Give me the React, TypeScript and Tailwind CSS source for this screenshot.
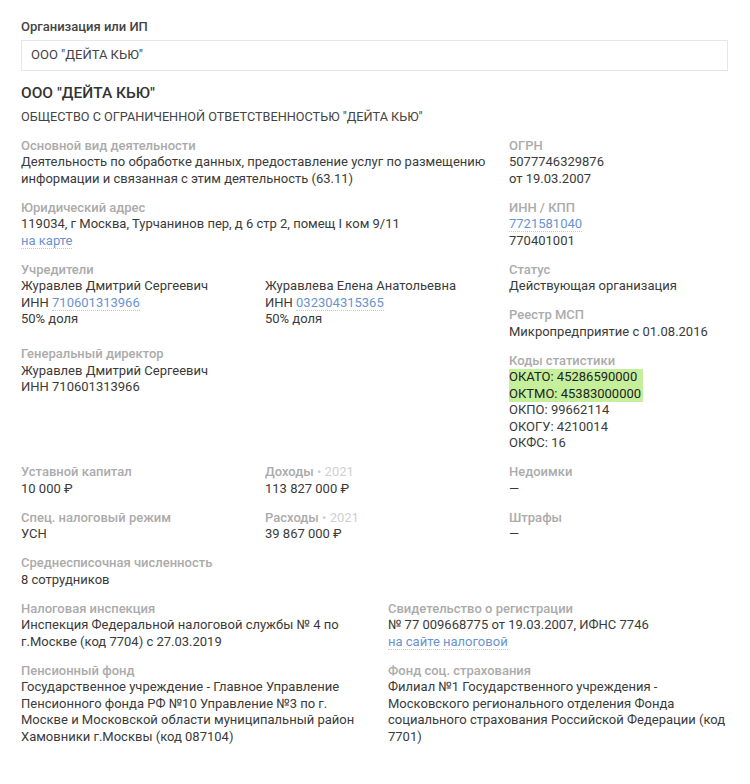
// Company card (Russian registry extract)

import React from "react";

const font = { fontFamily: "Roboto, 'Noto Sans', sans-serif" };

function Label({ children }: { children: React.ReactNode }) {
  return <div className="font-medium text-[#ababab]">{children}</div>;
}

function Link({ children }: { children: React.ReactNode }) {
  return (
    <a className="border-b border-dotted border-[#b9cbe6] text-[#6a93cf]" href="#">
      {children}
    </a>
  );
}

function Field({
  label,
  children,
  className = "",
}: {
  label: React.ReactNode;
  children: React.ReactNode;
  className?: string;
}) {
  return (
    <div className={"mb-[12.5px] " + className}>
      <Label>{label}</Label>
      <div>{children}</div>
    </div>
  );
}

export default function App() {
  return (
    <div
      style={font}
      className="min-h-[784px] bg-white px-[21px] pt-[19px] text-[13px] leading-[16.5px] text-[#3a3a3a]"
    >
      {/* ---- Search input ---- */}
      <div className="mb-[4.5px] font-medium text-[#444]">Организация или ИП</div>
      <div className="flex h-[31px] w-[707px] items-center border border-[#e6e6e6] px-[9px] text-[#444]">
        ООО "ДЕЙТА КЬЮ"
      </div>

      {/* ---- Title ---- */}
      <h1 className="mt-[12px] text-[15.5px] leading-[20px] font-medium text-[#333]">
        ООО "ДЕЙТА КЬЮ"
      </h1>
      <div className="mt-[5.5px] mb-[12.5px] text-[12.7px] text-[#444]">
        ОБЩЕСТВО С ОГРАНИЧЕННОЙ ОТВЕТСТВЕННОСТЬЮ "ДЕЙТА КЬЮ"
      </div>

      {/* ---- Main details ---- */}
      <div className="grid grid-cols-[488px_1fr]">
        <div>
          <Field label="Основной вид деятельности">
            Деятельность по обработке данных, предоставление услуг по размещению
            информации и связанная с этим деятельность (63.11)
          </Field>
          <Field label="Юридический адрес">
            119034, г Москва, Турчанинов пер, д 6 стр 2, помещ I ком 9/11
            <div>
              <Link>на карте</Link>
            </div>
          </Field>
          <div className="mb-[18.5px]">
            <Label>Учредители</Label>
            <div className="grid grid-cols-[244px_1fr]">
              <div>
                <div>Журавлев Дмитрий Сергеевич</div>
                <div>
                  ИНН <Link>710601313966</Link>
                </div>
                <div>50% доля</div>
              </div>
              <div>
                <div>Журавлева Елена Анатольевна</div>
                <div>
                  ИНН <Link>032304315365</Link>
                </div>
                <div>50% доля</div>
              </div>
            </div>
          </div>
          <Field label="Генеральный директор">
            <div>Журавлев Дмитрий Сергеевич</div>
            <div>ИНН 710601313966</div>
          </Field>
        </div>

        <div>
          <Field label="ОГРН">
            <div>5077746329876</div>
            <div>от 19.03.2007</div>
          </Field>
          <Field label="ИНН / КПП">
            <div>
              <Link>7721581040</Link>
            </div>
            <div>770401001</div>
          </Field>
          <Field label="Статус">Действующая организация</Field>
          <Field label="Реестр МСП">Микропредприятие с 01.08.2016</Field>
          <Field label="Коды статистики">
            <div className="inline-block bg-[#c6ef9c] pr-[2px] text-[#222]">
              <div>ОКАТО: 45286590000</div>
              <div>ОКТМО: 45383000000</div>
            </div>
            <div>ОКПО: 99662114</div>
            <div>ОКОГУ: 4210014</div>
            <div>ОКФС: 16</div>
          </Field>
        </div>
      </div>

      {/* ---- Finance ---- */}
      <div className="grid grid-cols-[244px_244px_1fr]">
        <Field label="Уставной капитал">10 000 ₽</Field>
        <Field
          label={
            <>
              Доходы <span className="font-normal text-[#cfcfcf]">• 2021</span>
            </>
          }
        >
          113 827 000 ₽
        </Field>
        <Field label="Недоимки">—</Field>
        <Field label="Спец. налоговый режим">УСН</Field>
        <Field
          label={
            <>
              Расходы <span className="font-normal text-[#cfcfcf]">• 2021</span>
            </>
          }
        >
          39 867 000 ₽
        </Field>
        <Field label="Штрафы">—</Field>
        <Field label="Среднесписочная численность">8 сотрудников</Field>
      </div>

      {/* ---- Registrations ---- */}
      <div className="grid grid-cols-[367px_1fr]">
        <Field label="Налоговая инспекция" className="pr-[20px]">
          Инспекция Федеральной налоговой службы № 4 по г.Москве (код 7704) с
          27.03.2019
        </Field>
        <Field label="Свидетельство о регистрации">
          № 77 009668775 от 19.03.2007, ИФНС 7746
          <div>
            <Link>на сайте налоговой</Link>
          </div>
        </Field>
        <Field label="Пенсионный фонд" className="pr-[20px]">
          Государственное учреждение - Главное Управление Пенсионного фонда РФ №10
          Управление №3 по г. Москве и Московской области муниципальный район
          Хамовники г.Москвы (код 087104)
        </Field>
        <Field label="Фонд соц. страхования">
          Филиал №1 Государственного учреждения - Московского регионального
          отделения Фонда социального страхования Российской Федерации (код 7701)
        </Field>
      </div>
    </div>
  );
}
